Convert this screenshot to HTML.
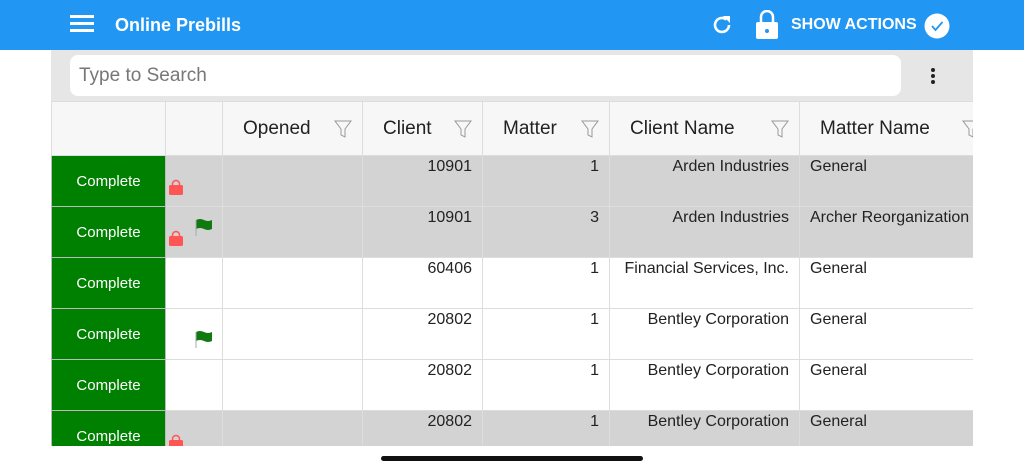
<!DOCTYPE html><html><head><style>
body{margin:0;width:1024px;height:471px;background:#fff;font-family:"Liberation Sans",sans-serif;position:relative;overflow:hidden}
.hdr{position:absolute;left:0;top:0;width:1024px;height:50px;background:#2196f3;color:#fff}
.wrap{position:absolute;left:51px;top:50px;width:922px;height:396px;overflow:hidden;background:#e6e6e6}
.search{position:absolute;left:19px;top:5px;width:831px;height:41px;background:#fff;border-radius:8px;font-size:19px;color:#777;line-height:41px;padding-left:9px;box-sizing:border-box}
table{position:absolute;left:0;top:51px;border-collapse:collapse;table-layout:fixed;width:928px}
td,th{border:1px solid #ddd;padding:0;box-sizing:border-box;font-weight:normal}
th{height:54px;background:#f7f7f7;font-size:19px;color:#222;text-align:left;padding-left:20px;position:relative;white-space:nowrap}
td{height:51px;font-size:16px;color:#222;vertical-align:top;padding:2px 10px 0;white-space:nowrap;overflow:hidden;background:#fff}
tr.g td{background:#d3d3d3}
td.c{background:#008000!important;color:#fff;text-align:center;vertical-align:middle;font-size:15px;padding:0;border-color:#bbb}
.r{text-align:right}
.f{position:absolute;right:10px;top:18px}
.ic{vertical-align:middle;padding:0 0 0 3px}
</style></head><body>
<div class="hdr">
<div style="position:absolute;left:70px;top:15px;width:24px;height:3px;background:#fff;box-shadow:0 7px 0 #fff,0 14px 0 #fff"></div>
<div style="position:absolute;left:115px;top:15px;font-size:18px;font-weight:bold">Online Prebills</div>
<svg style="position:absolute;left:710px;top:13px" width="24" height="24" viewBox="0 0 24 24"><path d="M19 12a7 7 0 1 1-2.5-5.4" fill="none" stroke="#fff" stroke-width="2.6"/><path d="M13 3h7v7z" fill="#fff"/></svg>
<svg style="position:absolute;left:756px;top:10px" width="22" height="29" viewBox="0 0 22 29"><path d="M5 13V7a6 6 0 0 1 12 0v6" fill="none" stroke="#fff" stroke-width="2.5"/><rect x="0" y="12" width="22" height="17" rx="2" fill="#fff"/><circle cx="11" cy="21" r="2" fill="#2196f3"/></svg>
<div style="position:absolute;left:791px;top:16px;font-size:16px;font-weight:bold">SHOW ACTIONS</div>
<svg style="position:absolute;left:924px;top:13px" width="26" height="26" viewBox="0 0 26 26"><circle cx="13" cy="13" r="12.5" fill="#fff"/><path d="M8 13l3.5 4 7-8" fill="none" stroke="#2196f3" stroke-width="1.8"/></svg>
</div>
<div class="wrap">
<div class="search">Type to Search</div>
<div style="position:absolute;left:880px;top:18px;width:4px;height:4px;border-radius:2px;background:#222;box-shadow:0 6px 0 #222,0 12px 0 #222"></div>
<table>
<colgroup><col style="width:114px"><col style="width:57px"><col style="width:140px"><col style="width:120px"><col style="width:127px"><col style="width:190px"><col style="width:180px"></colgroup>
<tr><th></th><th></th>
<th>Opened<svg class="f" width="18" height="18" viewBox="0 0 18 18"><path d="M1 1h16l-6 8v8l-4-2V9z" fill="none" stroke="#999"/></svg></th>
<th>Client<svg class="f" width="18" height="18" viewBox="0 0 18 18"><path d="M1 1h16l-6 8v8l-4-2V9z" fill="none" stroke="#999"/></svg></th>
<th>Matter<svg class="f" width="18" height="18" viewBox="0 0 18 18"><path d="M1 1h16l-6 8v8l-4-2V9z" fill="none" stroke="#999"/></svg></th>
<th>Client Name<svg class="f" width="18" height="18" viewBox="0 0 18 18"><path d="M1 1h16l-6 8v8l-4-2V9z" fill="none" stroke="#999"/></svg></th>
<th>Matter Name<svg class="f" style="right:-1px" width="18" height="18" viewBox="0 0 18 18"><path d="M1 1h16l-6 8v8l-4-2V9z" fill="none" stroke="#999"/></svg></th></tr>
<tr class="g"><td class="c">Complete</td><td class="ic"><svg width="14" height="16" viewBox="0 0 14 16" style="margin-top:16px"><path d="M3.5 7V5a3.5 3.5 0 0 1 7 0v2" fill="none" stroke="#f55" stroke-width="1.5"/><rect x="0" y="6" width="14" height="10" rx="1.5" fill="#f55"/></svg></td><td></td><td class="r">10901</td><td class="r">1</td><td class="r">Arden Industries</td><td>General</td></tr>
<tr class="g"><td class="c">Complete</td><td class="ic"><svg width="14" height="16" viewBox="0 0 14 16" style="margin-top:16px"><path d="M3.5 7V5a3.5 3.5 0 0 1 7 0v2" fill="none" stroke="#f55" stroke-width="1.5"/><rect x="0" y="6" width="14" height="10" rx="1.5" fill="#f55"/></svg><svg width="18" height="18" viewBox="0 0 18 18" style="margin:0 0 10px 12px"><path d="M1 2q4-2 8 0t8 0v9q-4 2-8 0t-8 0z" fill="#107a10"/><path d="M1 2v16" stroke="#aaa"/></svg></td><td></td><td class="r">10901</td><td class="r">3</td><td class="r">Arden Industries</td><td>Archer Reorganization</td></tr>
<tr><td class="c">Complete</td><td></td><td></td><td class="r">60406</td><td class="r">1</td><td class="r" style="padding-right:10px">Financial Services, Inc.</td><td>General</td></tr>
<tr><td class="c">Complete</td><td class="ic"><svg width="18" height="18" viewBox="0 0 18 18" style="margin:14px 0 0 26px"><path d="M1 2q4-2 8 0t8 0v9q-4 2-8 0t-8 0z" fill="#107a10"/><path d="M1 2v16" stroke="#aaa"/></svg></td><td></td><td class="r">20802</td><td class="r">1</td><td class="r">Bentley Corporation</td><td>General</td></tr>
<tr><td class="c">Complete</td><td></td><td></td><td class="r">20802</td><td class="r">1</td><td class="r">Bentley Corporation</td><td>General</td></tr>
<tr class="g"><td class="c">Complete</td><td class="ic"><svg width="14" height="16" viewBox="0 0 14 16" style="margin-top:16px"><path d="M3.5 7V5a3.5 3.5 0 0 1 7 0v2" fill="none" stroke="#f55" stroke-width="1.5"/><rect x="0" y="6" width="14" height="10" rx="1.5" fill="#f55"/></svg></td><td></td><td class="r">20802</td><td class="r">1</td><td class="r">Bentley Corporation</td><td>General</td></tr>
</table>
</div>
<div style="position:absolute;left:381px;top:456px;width:262px;height:5px;border-radius:3px;background:#111"></div>
</body></html>
